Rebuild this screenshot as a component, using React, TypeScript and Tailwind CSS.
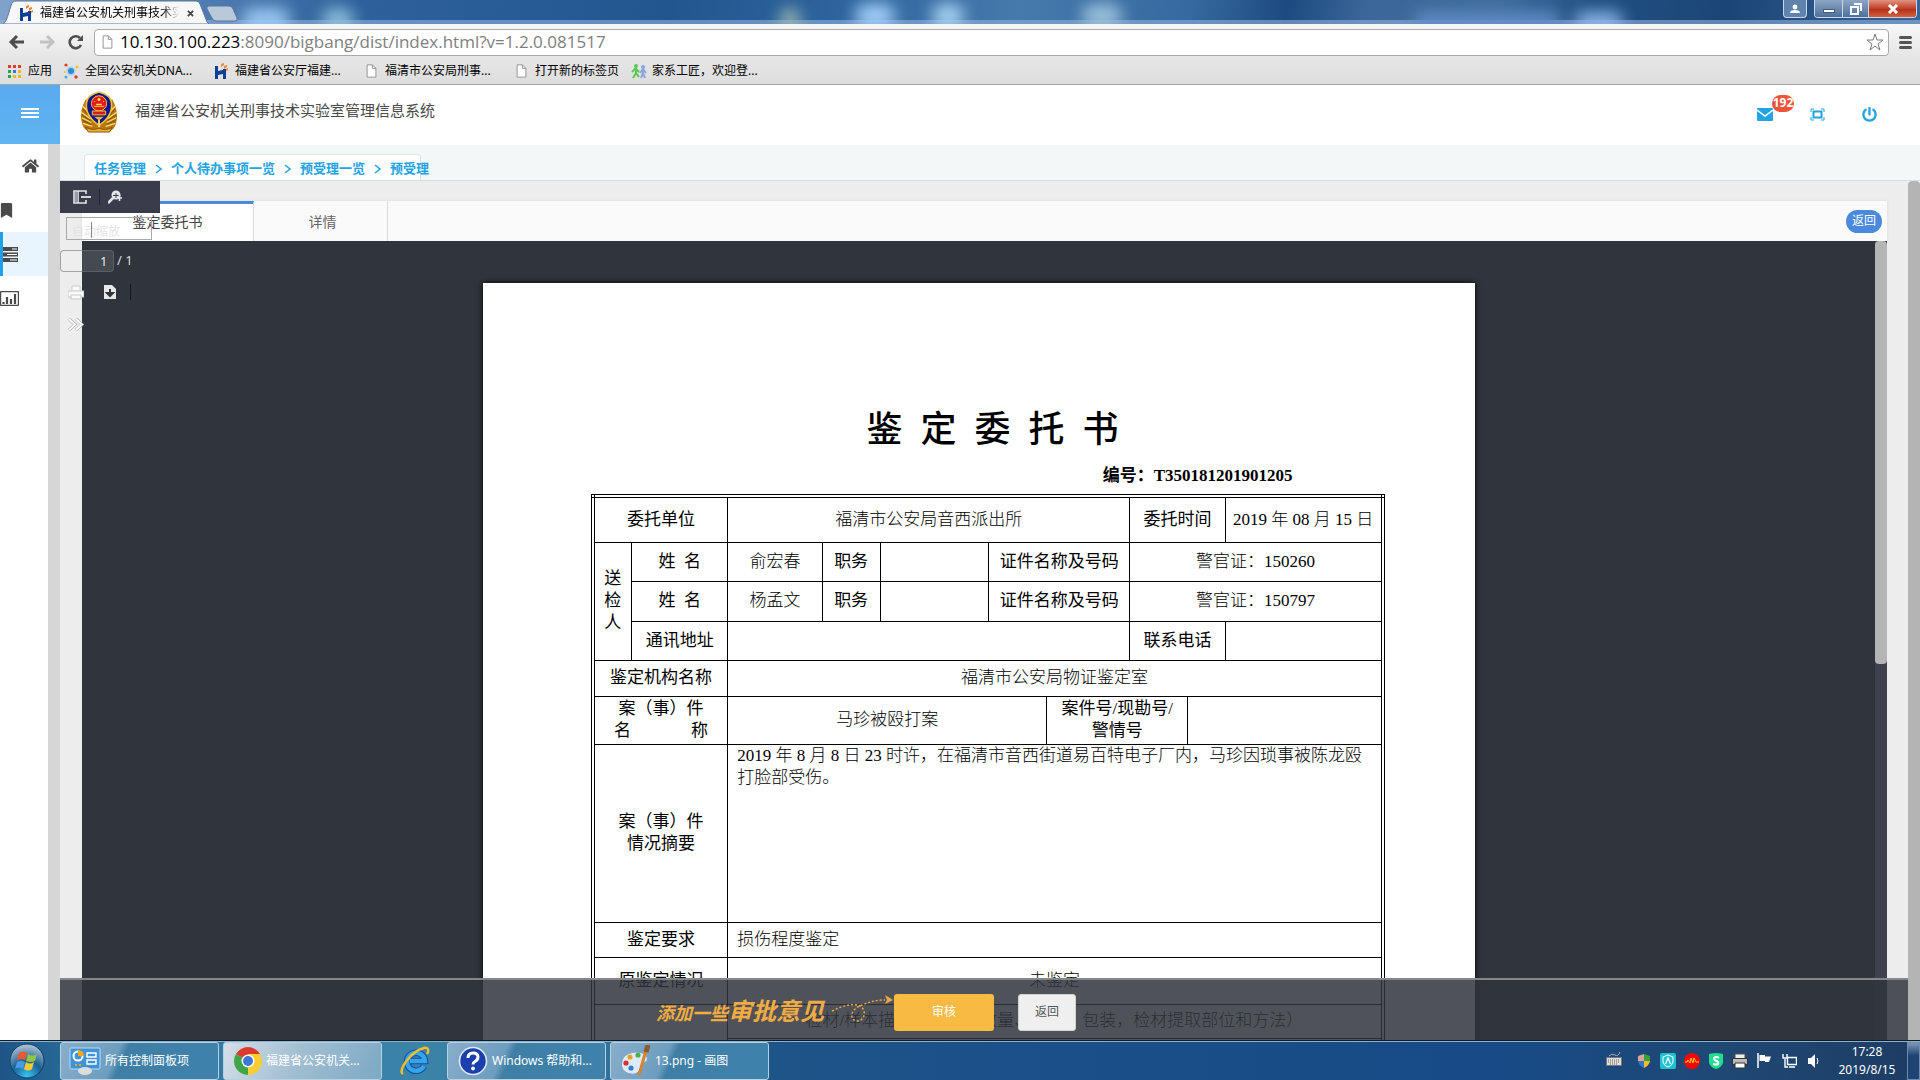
import type { ReactNode } from "react";
import { FaBookmark, FaHome, FaPowerOff } from "react-icons/fa";

const ui = "font-['Noto_Sans','Noto_Sans_CJK_SC',sans-serif]";
const serif = "font-['Liberation_Serif','Noto_Sans_CJK_SC',serif]";

function HLogo() {
  return (
    <svg viewBox="0 0 14 16" className="h-4 w-[14px] shrink-0">
      <path d="M0 3h3v5l5-1V6h3v10H8v-5l-5 1v4H0z" fill="#0b3f97" />
      <path d="M6 1l3-1v2L6 4zM9 3l3-1v2L9 6zM11 6l2-1v2l-2 1z" fill="#f0862b" />
    </svg>
  );
}

function PageIcon() {
  return (
    <svg viewBox="0 0 12 16" className="h-[14px] w-[11px] shrink-0">
      <path d="M1 1h6l4 4v10H1z" fill="#fff" stroke="#8a8a8a" />
      <path d="M7 1v4h4" fill="none" stroke="#8a8a8a" />
    </svg>
  );
}

function AppsIcon() {
  const colors = ["#e33b2e", "#e33b2e", "#e33b2e", "#2ba24c", "#3a76e8", "#f3b922", "#2ba24c", "#f3b922", "#f3b922"];
  return (
    <svg viewBox="0 0 13 13" className="h-[13px] w-[13px] shrink-0">
      {colors.map((c, i) => (
        <rect key={i} x={(i % 3) * 5} y={Math.floor(i / 3) * 5} width="3" height="3" fill={c} />
      ))}
    </svg>
  );
}

function MoleculeIcon() {
  return (
    <svg viewBox="0 0 16 16" className="h-4 w-4 shrink-0">
      <circle cx="8" cy="8" r="4.5" fill="#a9d3f2" />
      <circle cx="8" cy="8" r="3" fill="#2f8bd8" />
      <circle cx="3" cy="2" r="1.6" fill="#e23a2e" />
      <circle cx="14" cy="4" r="1.6" fill="#f2c230" />
      <circle cx="1.600" cy="9" r="1" fill="#f2c230" />
      <circle cx="3" cy="14" r="1.5" fill="#49a6df" />
      <circle cx="13" cy="14" r="1.7" fill="#e23a2e" />
    </svg>
  );
}

function PeopleIcon() {
  return (
    <svg viewBox="0 0 16 16" className="h-4 w-4 shrink-0">
      <circle cx="5" cy="3" r="2" fill="#5cc653" />
      <path d="M5 5l-4 4M5 5v5l-3 5M5 10l3 4M5 6l3 3" stroke="#5cc653" strokeWidth="2" fill="none" />
      <circle cx="12" cy="4" r="2" fill="#8ba4dc" />
      <path d="M12 6l-3 4M12 6v4l-2 5M12 10l2 5M12 6l3 4" stroke="#8ba4dc" strokeWidth="2" fill="none" />
    </svg>
  );
}

function TitleBar() {
  return (
    <div className="relative flex h-6 shrink-0 overflow-hidden bg-[linear-gradient(100deg,#7fa3cc_0%,#5a86bb_8%,#2f629c_18%,#22568f_35%,#2c639c_43%,#4679ac_53%,#36699f_62%,#1d4a80_67%,#3a6699_71%,#3f6b9c_78%,#214f83_83%,#1b4575_90%,#3a6598_100%)]">
      <div className="absolute inset-x-0 bottom-0 h-1 bg-[#8fb3dc]/60" />
      <div className="absolute left-[242px] top-2 h-6 w-12 rounded-full bg-[#9cc8f2] blur-sm" />
      <div className="absolute left-[322px] top-2 h-6 w-8 rounded-full bg-[#8fc0dc] blur-sm" />
      <div className="absolute left-[780px] top-2 h-6 w-5 rounded-full bg-[#9cb8b4] blur-sm" />
      <div className="absolute left-[855px] top-1 h-6 w-10 rounded-full bg-[#a5d0fa] blur-sm" />
      <div className="absolute left-[932px] top-1 h-6 w-8 rounded-full bg-[#a9d4f5] blur-sm" />
      <div className="absolute left-[1082px] top-1 h-6 w-10 rounded-full bg-[#9cc3dc] blur-sm" />
      <div className="absolute left-[1415px] top-3 h-5 w-36 rounded bg-[#5f8cc4] blur-sm" />
      <div className="absolute left-[1575px] top-3 h-5 w-12 rounded-full bg-[#8fb8e8] blur-sm" />
      <svg viewBox="0 0 240 24" className="absolute left-0 top-0 h-6 w-[240px]">
        <path d="M3 24C8 22 10 4 13 2q1-1 3-1H196q3 0 4 3l7 18 2 2z" fill="#f7f7f7" stroke="#5b7899" />
        <path d="M209 6h20q3 0 4 3l4 9q1 3-2 3h-19q-3 0-4-3l-5-9q-1-3 2-3z" fill="#b9c8da" stroke="#5b7899" />
      </svg>
      <div className={`relative ml-5 flex h-6 items-center gap-1 pt-[2px] ${ui}`}>
        <HLogo />
        <span className="ml-[2px] w-[139px] overflow-hidden whitespace-nowrap text-[12px] leading-5 text-black [mask-image:linear-gradient(90deg,#000_88%,transparent)]">
          福建省公安机关刑事技术实
        </span>
        <button aria-label="关闭标签页" className="ml-1 p-0">
          <svg viewBox="0 0 8 8" className="h-[7px] w-[7px]">
            <path d="M1 1l6 6M7 1L1 7" stroke="#444" strokeWidth="2" />
          </svg>
        </button>
      </div>
      <div className="relative ml-auto mr-[3px] flex h-[18px] gap-[7px]">
        <button aria-label="用户" className="flex w-6 items-center justify-center rounded-b border border-t-0 border-[#c7d6e8] bg-[#5f83ad]">
          <svg viewBox="0 0 10 10" className="h-[10px] w-[10px]">
            <circle cx="5" cy="3" r="2.4" fill="#fff" />
            <path d="M0 9q0-3 5-3t5 3z" fill="#fff" />
          </svg>
        </button>
        <div className="flex overflow-hidden rounded-b border border-t-0 border-[#c7d6e8]">
          <button aria-label="最小化" className="flex w-7 items-center justify-center border-r border-[#c7d6e8] bg-[linear-gradient(#8ba5c4,#4d719c)]">
            <span className="mt-1 h-1 w-3 border border-[#47597a] bg-white" />
          </button>
          <button aria-label="还原" className="flex w-[26px] items-center justify-center border-r border-[#c7d6e8] bg-[linear-gradient(#8ba5c4,#4d719c)]">
            <svg viewBox="0 0 12 12" className="h-3 w-3">
              <path d="M4 1h7v7M1 4h7v7H1z" fill="none" stroke="#fff" strokeWidth="2" />
            </svg>
          </button>
          <button aria-label="关闭" className="flex w-[47px] items-center justify-center bg-[linear-gradient(#e0937f,#c2402a_50%,#b23319_55%,#d4603f)]">
            <svg viewBox="0 0 12 10" className="h-[10px] w-3">
              <path d="M2 1l8 8M10 1L2 9" stroke="#fff" strokeWidth="3" />
            </svg>
          </button>
        </div>
      </div>
    </div>
  );
}

function Toolbar() {
  return (
    <div className="flex h-[34px] shrink-0 items-center bg-[linear-gradient(#f7f7f7,#e6e6e6)] pl-2 pr-2 pt-[2px]">
      <button aria-label="后退" className="w-[18px]">
        <svg viewBox="0 0 18 16" className="h-4 w-[18px]">
          <path d="M9 2L3 8l6 6M3 8h13" fill="none" stroke="#4d4d4d" strokeWidth="3" />
        </svg>
      </button>
      <button aria-label="前进" className="ml-3 w-[18px]">
        <svg viewBox="0 0 18 16" className="h-4 w-[18px]">
          <path d="M9 2l6 6-6 6M15 8H2" fill="none" stroke="#c2c2c2" strokeWidth="3" />
        </svg>
      </button>
      <button aria-label="重新加载" className="ml-3 w-4">
        <svg viewBox="0 0 16 16" className="h-4 w-4">
          <path d="M13 11a6 6 0 1 1-1-7" fill="none" stroke="#4d4d4d" strokeWidth="2.6" />
          <path d="M15 1v6H9z" fill="#4d4d4d" />
        </svg>
      </button>
      <div className="relative ml-[10px] flex h-[27px] min-w-0 flex-1 items-center rounded-sm border border-[#a9a9a9] bg-white pl-[7px] pr-1">
        <PageIcon />
        <div className="relative ml-[7px] h-6 flex-1">
          <input
            aria-label="地址"
            defaultValue="10.130.100.223:8090/bigbang/dist/index.html?v=1.2.0.081517"
            className="absolute inset-0 w-full bg-transparent text-transparent opacity-0"
          />
          <p aria-hidden="true" className="pointer-events-none whitespace-nowrap font-['Open_Sans',sans-serif] text-[17px] leading-6 text-[#808080]">
            <span className="text-black">10.130.100.223</span>:8090/bigbang/dist/index.html?v=1.2.0.081517
          </p>
        </div>
        <button aria-label="收藏">
          <svg viewBox="0 0 18 18" className="h-[18px] w-[18px]">
            <path d="M9 1l2 6h6l-5 4 2 6-5-4-5 4 2-6-5-4h6z" fill="#fff" stroke="#7a7a7a" />
          </svg>
        </button>
      </div>
      <button aria-label="菜单" className="ml-[10px] flex flex-col gap-[2px]">
        <span className="h-[3px] w-[13px] rounded bg-[#555]" />
        <span className="h-[3px] w-[13px] rounded bg-[#555]" />
        <span className="h-[3px] w-[13px] rounded bg-[#555]" />
      </button>
    </div>
  );
}

const bookmarks: { icon: ReactNode; label: string; cls: string }[] = [
  { icon: <AppsIcon />, label: "应用", cls: "w-[55px] gap-[7px]" },
  { icon: <MoleculeIcon />, label: "全国公安机关DNA...", cls: "w-[152px] gap-[6px]" },
  { icon: <HLogo />, label: "福建省公安厅福建...", cls: "w-[151px] gap-[6px]" },
  { icon: <PageIcon />, label: "福清市公安局刑事...", cls: "w-[150px] gap-[8px]" },
  { icon: <PageIcon />, label: "打开新的标签页", cls: "w-[115px] gap-[8px]" },
  { icon: <PeopleIcon />, label: "家系工匠，欢迎登...", cls: "gap-[5px]" },
];

function Bookmarks() {
  return (
    <nav className={`flex h-[27px] shrink-0 items-center border-b border-[#a5a5a5] bg-[linear-gradient(#e6e6e6,#dedede)] pl-2 text-[12px] text-black ${ui}`}>
      {bookmarks.map((b) => (
        <a key={b.label} href="#" className={`flex shrink-0 items-center whitespace-nowrap ${b.cls}`}>
          {b.icon}
          <span>{b.label}</span>
        </a>
      ))}
    </nav>
  );
}

function Emblem() {
  return (
    <svg viewBox="0 0 40 44" className="h-[42px] w-10 shrink-0">
      <path d="M6 9Q-1 22 2 33q1 8 10 10h16q9-2 10-10Q41 22 34 9z" fill="#b9780f" />
      <path d="M3 16l8 8M1 22l10 7M2 28l10 5M3 34l10 3M37 16l-8 8M39 22l-10 7M38 28l-10 5M37 34l-10 3" stroke="#f7df70" strokeWidth="1.4" />
      <path d="M3 19l8 8M2 25l9 6M3 31l9 4M37 19l-8 8M38 25l-9 6M37 31l-9 4" stroke="#7a430c" />
      <path d="M20 1q12 3 13 11 2 14-13 24Q5 26 7 12 8 4 20 1z" fill="#14148f" stroke="#eec23a" strokeWidth="1.6" />
      <circle cx="20" cy="13" r="8" fill="#e01b16" stroke="#f1cc47" />
      <circle cx="20" cy="9" r="1.6" fill="#ffe04d" />
      <path d="M15 11h1M24 11h1M17 14h6M15 16h10" stroke="#ffe04d" strokeWidth="1.2" />
      <path d="M13 21h14v4H13z" fill="#d91a16" stroke="#f1cc47" />
      <path d="M15 27h10l-5 4z" fill="#e8b32e" />
      <path d="M20 30v8" stroke="#f7df70" strokeWidth="2" />
      <path d="M6 38q7 4 14 1 7 3 14-1l-3 5H9z" fill="#e8b32e" stroke="#8a4e10" />
    </svg>
  );
}

function Header() {
  return (
    <header className="flex h-[60px] shrink-0 items-center bg-white pb-[6px] pl-[19px] pr-[43px]">
      <Emblem />
      <h1 className={`mb-1 ml-4 text-[15px] text-[#4a4a4a] ${ui}`}>福建省公安机关刑事技术实验室管理信息系统</h1>
      <div className="ml-auto mt-1 flex items-center text-[#23a3e4]">
        <button aria-label="消息" className="relative mr-[37px]">
          <svg viewBox="0 0 16 13" className="h-[13px] w-4">
            <rect width="16" height="13" rx="1" fill="currentColor" />
            <path d="M0 2l8 6 8-6" fill="none" stroke="#fff" strokeWidth="1.4" />
          </svg>
          <span className={`absolute -top-[13px] left-[15px] flex h-[17px] w-[22px] items-center justify-center rounded-full bg-[#ee543c] text-[12px] font-bold leading-4 text-white ${ui}`}>
            192
          </span>
        </button>
        <button aria-label="全屏" className="mr-[37px]">
          <svg viewBox="0 0 15 13" className="h-[13px] w-[15px]">
            <path d="M1 4V1h3M11 1h3v3M14 9v3h-3M4 12H1V9" fill="none" stroke="currentColor" />
            <rect x="3.5" y="3.5" width="8" height="6" fill="none" stroke="currentColor" strokeWidth="2" />
          </svg>
        </button>
        <button aria-label="退出">
          <FaPowerOff className="h-[15px] w-[15px]" />
        </button>
      </div>
    </header>
  );
}

function Chevron() {
  return (
    <svg viewBox="0 0 7 10" className="h-[10px] w-[7px]">
      <path d="M1 1l5 4-5 4" fill="none" stroke="#23a3e4" strokeWidth="1.5" />
    </svg>
  );
}

function Breadcrumb() {
  const items = ["任务管理", "个人待办事项一览", "预受理一览", "预受理"];
  return (
    <div className="flex h-9 shrink-0 items-end border-b border-[#d9e0e4] bg-[#f4f7f7] pl-6">
      <nav aria-label="面包屑" className={`flex h-[26px] w-[337px] items-center gap-[9px] whitespace-nowrap rounded-t border border-b-0 border-[#dfe5e8] bg-white pl-[9px] pt-[2px] text-[13px] font-bold text-[#23a3e4] ${ui}`}>
        {items.map((t, i) => (
          <span key={t} className="flex shrink-0 items-center gap-[9px]">
            {i > 0 && <Chevron />}
            <a href="#">{t}</a>
          </span>
        ))}
      </nav>
    </div>
  );
}

function Sidebar() {
  return (
    <aside className="flex w-[60px] shrink-0 flex-col">
      <button aria-label="展开菜单" className="flex h-[60px] shrink-0 flex-col items-center justify-center gap-[2px] bg-[linear-gradient(#59aaf0,#60b5ef)] pb-1">
        <span className="h-[2px] w-[18px] bg-white" />
        <span className="h-[2px] w-[18px] bg-white" />
        <span className="h-[2px] w-[18px] bg-white" />
      </button>
      <nav className="-mt-px flex flex-1 flex-col border-r-[12px] border-[#d6d6d6] bg-white text-[#4a4a4a]">
        <a href="#" aria-label="首页" className="flex h-11 items-center pl-[22px]">
          <FaHome className="h-[16px] w-[17px]" />
        </a>
        <a href="#" aria-label="收藏" className="flex h-11 items-center">
          <FaBookmark className="h-[15px] w-[13px]" />
        </a>
        <a href="#" aria-label="任务" className="flex h-11 items-center border-l-[3px] border-[#1e9fe8] bg-[#e8f5ff]">
          <svg viewBox="0 0 16 15" className="h-[15px] w-4">
            <path d="M0 0h15v4H0zM0 5.5h15v4H0zM0 11h15v4H0z" fill="#4a4a4a" />
            <path d="M9 1.5h5v1H9zM4 7h10v1H4zM7 12.5h7v1H7z" fill="#fff" />
          </svg>
        </a>
        <a href="#" aria-label="统计" className="flex h-11 items-center">
          <svg viewBox="0 0 19 15" className="h-[15px] w-[19px]">
            <rect x="0.5" y="0.5" width="18" height="14" rx="1" fill="none" stroke="#4a4a4a" strokeWidth="1.4" />
            <path d="M3.500 13v-2M7 13V6M11 13V8M15 13V3" stroke="#4a4a4a" strokeWidth="2.200" />
          </svg>
        </a>
      </nav>
    </aside>
  );
}

function ViewerTools() {
  return (
    <div className={ui}>
      <div className="absolute left-0 top-0 flex h-8 w-[100px] items-center bg-[#3a3b4b] pl-[13px]">
        <button aria-label="切换侧栏">
          <svg viewBox="0 0 18 14" className="h-[14px] w-[18px]">
            <path d="M13 4V1H1v12h12v-3M5 1v12" fill="none" stroke="#e6e6e6" strokeWidth="1.600" />
            <path d="M8 7h10" stroke="#e6e6e6" strokeWidth="1.800" />
            <rect x="2" y="2" width="3" height="10" fill="#9a9aa6" />
          </svg>
        </button>
        <span className="mx-2 h-4 w-px bg-[#23242e]" />
        <button aria-label="查找">
          <svg viewBox="0 0 14 14" className="h-[14px] w-[14px]">
            <circle cx="8" cy="5" r="4.500" fill="#e6e6e6" />
            <path d="M5 8l-5 5" stroke="#e6e6e6" strokeWidth="2.600" />
            <path d="M5 5.500h6M8 3v5" stroke="#3a3b4b" />
            <path d="M9 8h5M11.500 5v6" stroke="#e6e6e6" strokeWidth="1.600" />
          </svg>
        </button>
      </div>
      <div className="absolute left-[6px] top-[36px] h-[23px] w-[86px] border border-[#a8a8a8]">
        <select aria-label="缩放" className="h-full w-full appearance-none bg-transparent pl-[5px] text-[12px] leading-5 text-[#e4e4e4]">
          <option>自动缩放</option>
        </select>
        <span className="absolute left-6 top-1 h-4 w-px bg-[#8c8c8c]" />
      </div>
      <div className="absolute left-0 top-[69px] flex items-center">
        <input aria-label="页码" defaultValue="1" className="h-[22px] w-[54px] rounded-sm border border-[#6d6f75]/60 bg-white/10 pr-[6px] text-right text-[12px] text-[#f0f0f0]" />
        <span className="ml-[3px] text-[13px] text-[#d9d9d9]">/ 1</span>
      </div>
      <div className="absolute left-2 top-[103px] flex h-4 items-center">
        <button aria-label="打印">
          <svg viewBox="0 0 16 16" className="h-4 w-4">
            <path d="M4 6V2h8v4M0 7h16v6H0z" fill="#fafafa" stroke="#c9c9c9" />
            <path d="M3 11h10v4H3z" fill="#fafafa" stroke="#c9c9c9" />
          </svg>
        </button>
        <button aria-label="下载" className="ml-5">
          <svg viewBox="0 0 12 14" className="h-[14px] w-3">
            <path d="M0 0h8l4 4v10H0z" fill="#e8e8e8" />
            <path d="M6 4v5M3 8l3 3 3-3z" stroke="#30353d" strokeWidth="2" fill="#30353d" />
          </svg>
        </button>
        <span className="ml-[14px] h-4 w-px bg-[#15181c]" />
      </div>
      <button aria-label="更多工具" className="absolute left-2 top-[137px]">
        <svg viewBox="0 0 16 13" className="h-[13px] w-4">
          <path d="M1 1l6 5.500L1 12M8 1l6 5.500L8 12" fill="none" stroke="#a8a8a8" strokeWidth="3" />
          <path d="M1 1l6 5.500L1 12M8 1l6 5.500L8 12" fill="none" stroke="#fff" strokeWidth="1.800" />
        </svg>
      </button>
    </div>
  );
}

const cols = ["w-[39px]", "w-[96px]", "w-[94px]", "w-[58px]", "w-[108px]", "w-[58px]", "w-[83px]", "w-[58px]", "w-[37px]", "w-[157px]"];

function C({ span = 1, rows = 1, head, className = "text-center", children }: { span?: number; rows?: number; head?: boolean; className?: string; children?: ReactNode }) {
  const Tag = head ? "th" : "td";
  return (
    <Tag colSpan={span} rowSpan={rows} className={`border border-black p-0 ${head ? "font-normal" : "font-light"} ${className}`}>
      {children}
    </Tag>
  );
}

function Document() {
  return (
    <article className={`w-[992px] shrink-0 self-start bg-white pl-[108px] pr-[90px] pt-[127px] text-black shadow-[0_0_6px_#000] ${serif}`}>
      <h2 className="ml-[10px] whitespace-pre text-center text-[36px] font-medium leading-[40px]">鉴  定  委  托  书</h2>
      <p className="mt-[14px] pr-[92px] text-right text-[17px] font-bold leading-[24px]">编号：T350181201901205</p>
      <table className="mt-[6px] w-full table-fixed border-collapse border-4 border-double border-black text-[17px] leading-[22px]">
        <colgroup>
          {cols.map((c, i) => (
            <col key={i} className={c} />
          ))}
        </colgroup>
        <tbody>
          <tr className="h-[46px]">
            <C head span={2}>委托单位</C>
            <C span={5}>福清市公安局音西派出所</C>
            <C head span={2}>委托时间</C>
            <C>2019 年 08 月 15 日</C>
          </tr>
          <tr className="h-[39px]">
            <C head rows={3}>送<br />检<br />人</C>
            <C head><span className="whitespace-pre">姓  名</span></C>
            <C>俞宏春</C>
            <C head>职务</C>
            <C />
            <C head span={2}>证件名称及号码</C>
            <C span={3}>警官证：150260</C>
          </tr>
          <tr className="h-[40px]">
            <C head><span className="whitespace-pre">姓  名</span></C>
            <C>杨孟文</C>
            <C head>职务</C>
            <C />
            <C head span={2}>证件名称及号码</C>
            <C span={3}>警官证：150797</C>
          </tr>
          <tr className="h-[39px]">
            <C head>通讯地址</C>
            <C span={5} />
            <C head span={2}>联系电话</C>
            <C />
          </tr>
          <tr className="h-[36px]">
            <C head span={2}>鉴定机构名称</C>
            <C span={8}>福清市公安局物证鉴定室</C>
          </tr>
          <tr className="h-[48px]">
            <C head span={2}>
              案（事）件
              <span className="mx-auto flex w-[94px] justify-between"><span>名</span><span>称</span></span>
            </C>
            <C span={4}>马珍被殴打案</C>
            <C head span={2}>案件号/现勘号/<br />警情号</C>
            <C span={2} />
          </tr>
          <tr className="h-[178px]">
            <C head span={2}>案（事）件<br />情况摘要</C>
            <C span={8} className="whitespace-nowrap pl-[9px]! text-left align-top">
              2019 年 8 月 8 日 23 时许，在福清市音西街道易百特电子厂内，马珍因琐事被陈龙殴
              <br />
              打脸部受伤。
            </C>
          </tr>
          <tr className="h-[35px]">
            <C head span={2}>鉴定要求</C>
            <C span={8} className="pl-[9px]! text-left">损伤程度鉴定</C>
          </tr>
          <tr className="h-[47px]">
            <C head span={2}>原鉴定情况</C>
            <C span={8}>未鉴定</C>
          </tr>
          <tr className="h-[34px]">
            <C head span={2} rows={2} />
            <C span={8}>检材/样本描述（名称、数量、性状、包装，检材提取部位和方法）</C>
          </tr>
          <tr className="h-[60px]">
            <C span={8} />
          </tr>
        </tbody>
      </table>
    </article>
  );
}

function ActionBar() {
  return (
    <div className={`absolute inset-x-0 bottom-0 flex h-[62px] items-center justify-center border-t-2 border-[#85878a] bg-[#30353c]/85 pl-[22px] pt-1 ${ui}`}>
      <span className="flex items-baseline whitespace-nowrap font-bold italic leading-8 text-[#f0ab45]">
        <span className="text-[18px]">添加一些</span>
        <span className="text-[24px]">审批意见</span>
      </span>
      <svg viewBox="0 0 70 32" className="mb-[6px] h-8 w-[70px]">
        <path d="M8 18C20 12 30 10 36 13c7 4 5 15-3 15-8-1-7-12 5-16 10-4 15-5 23-5" fill="none" stroke="#f0ab45" strokeWidth="1.400" strokeDasharray="2 2" />
        <path d="M61 2l8 5-8 4 2-4z" fill="#f0ab45" />
      </svg>
      <button className="h-[37px] w-[100px] rounded-[3px] bg-[#f7ba43] text-[12px] text-white">审核</button>
      <button className="ml-6 mr-[258px] h-[37px] w-[58px] rounded-[3px] border border-[#d2d2d2] bg-[#efefef] text-[12px] text-[#555]">返回</button>
    </div>
  );
}

function Main() {
  return (
    <div className="flex min-h-0 flex-1">
      <main className="relative flex min-w-0 flex-1 flex-col bg-[#ededed] pl-[22px] pr-[21px] pt-[20px]">
        <div role="tablist" className={`flex h-10 shrink-0 items-stretch bg-[#fafafa] text-[14px] shadow-[0_0_3px_#ddd] ${ui}`}>
          <button role="tab" aria-selected="true" className="w-[172px] border-r border-t-[3px] border-r-[#d9dcdf] border-t-[#4a89dc] bg-white pb-[3px] text-[#444]">鉴定委托书</button>
          <button role="tab" aria-selected="false" className="w-[134px] border-r border-[#d9dcdf] pl-1 text-[#666]">详情</button>
          <button className="my-auto ml-auto mr-[5px] h-[23px] w-9 rounded-full bg-[#4a89dc] text-[12px] text-white">返回</button>
        </div>
        <div className="flex min-h-0 flex-1 overflow-hidden bg-[#30353d]">
          <div className="flex min-w-0 flex-1 justify-center bg-[#30353d] pt-[42px]">
            <Document />
          </div>
          <div className="w-3 shrink-0 bg-[#40404f]">
            <div className="h-[53%] rounded bg-[#b5b5b5]" />
          </div>
        </div>
        <ViewerTools />
        <ActionBar />
      </main>
      <div className="w-3 shrink-0 rounded-t bg-[#b4b4b4]" />
    </div>
  );
}

function TaskButton({ icon, label, active }: { icon: ReactNode; label: string; active?: boolean }) {
  return (
    <button className={`flex h-[38px] w-[159px] items-center gap-[4px] rounded-[3px] border border-[#b7d0e2] pl-[8px] text-left text-[12px] text-white ${active ? "bg-[linear-gradient(115deg,#d5dfe8,#a3bfd2_45%,#7ba9c4)]" : "bg-[linear-gradient(115deg,#88aecb,#6d9dbe_35%,#3f7fa6_40%,#3e82ab)]"}`}>
      {icon}
      <span className="whitespace-nowrap">{label}</span>
    </button>
  );
}

function IeIcon() {
  return (
    <svg viewBox="0 0 32 32" className="h-8 w-8">
      <path d="M25 21a9 9 0 1 1 1-5H11" fill="none" stroke="#0d4fa3" strokeWidth="6.500" />
      <path d="M25 21a9 9 0 1 1 1-5H11" fill="none" stroke="#37a3ea" strokeWidth="4.500" />
      <path d="M4 29C-2 26 12 6 25 3c5-1 5 3 3 6" fill="none" stroke="#f2bf2b" strokeWidth="2.400" />
    </svg>
  );
}

function Taskbar() {
  return (
    <footer className={`flex h-10 shrink-0 items-center border-t border-[#101b28] bg-[linear-gradient(90deg,#1d5587_0%,#2f78a2_6%,#3c83a8_22%,#2f7099_33%,#1d5588_40%,#1a4f89_55%,#174a86_78%,#1f4874_90%,#1d3c63_100%)] text-white shadow-[inset_0_1px_0_#8db2cd] ${ui}`}>
      <button aria-label="开始" className="ml-2 mr-[14px]">
        <svg viewBox="0 0 38 38" className="h-[38px] w-[38px]">
          <defs>
            <radialGradient id="orb" cx="50%" cy="95%" r="90%">
              <stop offset="0" stopColor="#35c8f5" />
              <stop offset="0.500" stopColor="#1b5f96" />
              <stop offset="1" stopColor="#a7bfd0" />
            </radialGradient>
          </defs>
          <circle cx="19" cy="19" r="17" fill="url(#orb)" stroke="#153c5c" />
          <path d="M11 11q4-3 8 0l-2 7q-4-2-8 0z" fill="#ec5a2c" />
          <path d="M20 12q4 3 9 0l-2 7q-4 2-9 0z" fill="#8ec641" />
          <path d="M9 20q4-2 8 0l-2 7q-4-3-8 0z" fill="#4a9be6" />
          <path d="M18 20q4 3 8 0l-2 7q-4 3-8 0z" fill="#fbc831" />
        </svg>
      </button>
      <div className="flex items-center gap-[4px]">
        <TaskButton
          label="所有控制面板项"
          icon={
            <svg viewBox="0 0 32 28" className="h-7 w-8 shrink-0">
              <rect x="1" y="1" width="30" height="21" rx="1" fill="#3f93d6" stroke="#b5dcf5" />
              <circle cx="9" cy="9" r="4.500" fill="none" stroke="#fff" strokeWidth="2" />
              <path d="M9 9V3q6 0 6 6z" fill="#f6a623" />
              <path d="M18 6h9v4h-9zM18 13h9v4h-9z" fill="none" stroke="#fff" strokeWidth="1.400" />
              <path d="M6 18h2M10 18h2" stroke="#f6a623" strokeWidth="2" />
              <ellipse cx="16" cy="24" rx="7" ry="4" fill="#dcdcdc" />
            </svg>
          }
        />
        <TaskButton
          active
          label="福建省公安机关..."
          icon={
            <svg viewBox="0 0 28 28" className="ml-[2px] h-7 w-7 shrink-0">
              <path d="M14 14L1.900 7A14 14 0 0 1 26.100 7z" fill="#dc3a2c" />
              <path d="M14 14L26.100 7A14 14 0 0 1 14 28z" fill="#fbcd30" />
              <path d="M14 14v14A14 14 0 0 1 1.900 7z" fill="#3fa548" />
              <path d="M14 7h12.100l-5 10z" fill="#fbcd30" />
              <circle cx="14" cy="14" r="6.500" fill="#fff" />
              <circle cx="14" cy="14" r="5" fill="#3c77d8" />
            </svg>
          }
        />
        <button aria-label="Internet Explorer" className="flex w-[57px] justify-center">
          <IeIcon />
        </button>
        <TaskButton
          label="Windows 帮助和..."
          icon={
            <svg viewBox="0 0 30 30" className="ml-[2px] h-[30px] w-[30px] shrink-0">
              <circle cx="15" cy="15" r="13.500" fill="#1c3fae" stroke="#e3e8f2" strokeWidth="1.600" />
              <path d="M10 12q0-5 5-5t5 4q0 3-3 4.500-2 1-2 3" fill="none" stroke="#fff" strokeWidth="3" />
              <circle cx="15" cy="22.500" r="1.900" fill="#fff" />
            </svg>
          }
        />
        <TaskButton
          label="13.png - 画图"
          icon={
            <svg viewBox="0 0 32 32" className="h-8 w-8 shrink-0">
              <path d="M3 16C5 6 24 4 28 12c2 6-5 5-6 9s-3 9-10 8S1 23 3 16z" fill="#dcebf7" stroke="#7da3c4" />
              <circle cx="11" cy="12" r="2.600" fill="#f0a21f" />
              <circle cx="19" cy="10" r="2.600" fill="#4cae4c" />
              <circle cx="7" cy="18" r="2.600" fill="#d9302c" />
              <circle cx="12" cy="23" r="2.600" fill="#2f80d0" />
              <path d="M28 2l-8 28" stroke="#d9822b" strokeWidth="3" />
              <path d="M29 0l-2 7" stroke="#8c5a2b" strokeWidth="5" />
            </svg>
          }
        />
      </div>
      <div className="ml-auto flex items-center">
        <svg viewBox="0 0 16 14" className="mb-1 mr-4 h-[14px] w-4">
          <rect x="0.500" y="5.500" width="15" height="8" fill="#ddd" stroke="#777" />
          <path d="M2 8h12M2 10h12M4 12h8" stroke="#666" strokeDasharray="1 1" />
          <path d="M3 4q3-3 6-1t5-3" stroke="#aaa" fill="none" />
        </svg>
        <svg viewBox="0 0 12 14" className="mr-[10px] h-[14px] w-3">
          <path d="M6 0L0 2v5h6z" fill="#d9a79a" />
          <path d="M6 0l6 2v5H6z" fill="#37a13c" />
          <path d="M0 7h6v7Q1 12 0 7z" fill="#3672c8" />
          <path d="M12 7H6v7q5-2 6-7z" fill="#f1bb2b" />
        </svg>
        <svg viewBox="0 0 16 16" className="mr-2 h-4 w-4">
          <rect width="16" height="16" rx="2" fill="#1fc3cf" />
          <path d="M8 2l5 2v5q-1 4-5 5-4-1-5-5V4z" fill="none" stroke="#fff" />
          <path d="M5.500 11L8 5l2.500 6" fill="none" stroke="#fff" strokeWidth="1.300" />
        </svg>
        <svg viewBox="0 0 16 16" className="mr-[9px] h-4 w-4">
          <circle cx="8" cy="8" r="8" fill="#f50505" />
          <path d="M1 9h2l1-2 2 3 1-5 2 5 1-5 2 4h3" fill="none" stroke="#ffd21f" />
        </svg>
        <svg viewBox="0 0 14 16" className="mr-[9px] h-4 w-[14px]">
          <path d="M0 1q7-2 14 0v9q-2 5-7 6-5-1-7-6z" fill="#1fdc8f" />
          <path d="M10 5Q7 3 5 5q0 2 2.500 3T9 11q-2 1-5 0" fill="none" stroke="#fff" strokeWidth="2" />
        </svg>
        <svg viewBox="0 0 16 16" className="mr-[9px] h-4 w-4">
          <path d="M3 1h10v5H3z" fill="#eee" stroke="#555" />
          <rect x="0.500" y="5.500" width="15" height="6" fill="#bbb" stroke="#333" />
          <path d="M3 10h10v5H3z" fill="#fff" stroke="#333" />
        </svg>
        <svg viewBox="0 0 15 15" className="mr-[10px] h-[15px] w-[15px]">
          <path d="M1 0v15" stroke="#fff" strokeWidth="1.500" />
          <path d="M2.500 2H8v1.500h6L12 9H8V8H2.500z" fill="#fff" />
        </svg>
        <svg viewBox="0 0 15 15" className="mr-[11px] h-[15px] w-[15px]">
          <path d="M5.500 4.500h9v7h-9zM7 14h6M3 6v8h3M1 1v4h4V1" fill="none" stroke="#fff" strokeWidth="1.400" />
        </svg>
        <svg viewBox="0 0 13 14" className="mr-[14px] h-[14px] w-[13px]">
          <path d="M0 4h3l4-4v14l-4-4H0z" fill="#fff" />
          <path d="M9 4q2 3 0 6" fill="none" stroke="#fff" />
        </svg>
        <div className="flex w-[64px] flex-col items-center text-[12px] leading-[18px]">
          <span>17:28</span>
          <span>2019/8/15</span>
        </div>
        <button aria-label="显示桌面" className="ml-2 h-[38px] w-[13px] border border-[#6d8cb0] bg-[linear-gradient(#7d97b5,#1f4474_35%)]" />
      </div>
    </footer>
  );
}

export default function App() {
  return (
    <div className="flex h-screen w-full flex-col overflow-hidden bg-white">
      <TitleBar />
      <Toolbar />
      <Bookmarks />
      <div className="flex min-h-0 flex-1">
        <Sidebar />
        <div className="flex min-w-0 flex-1 flex-col">
          <Header />
          <Breadcrumb />
          <Main />
        </div>
      </div>
      <Taskbar />
    </div>
  );
}
